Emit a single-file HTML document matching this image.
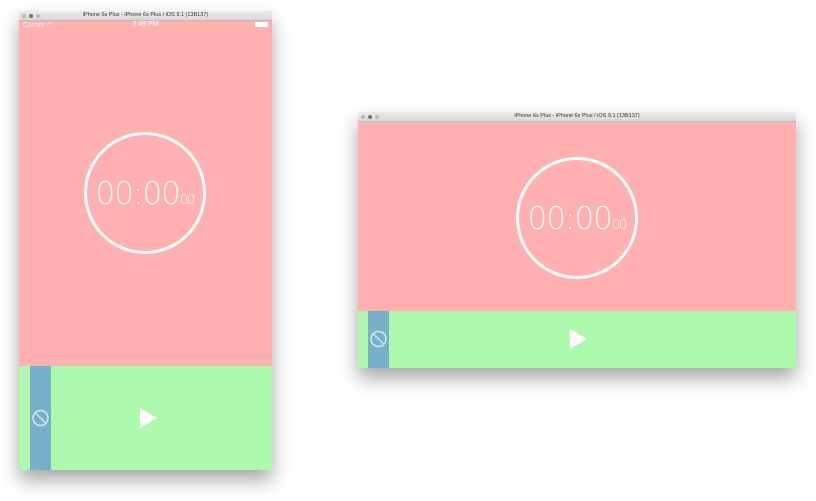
<!DOCTYPE html>
<html><head><style>
body{margin:0;width:816px;height:501px;background:#fff;position:relative;overflow:hidden;font-family:"Liberation Sans",sans-serif}
.win{position:absolute;box-shadow:0 10px 18px rgba(0,0,0,.35);background:#ffb0b0}
.tb{position:absolute;left:0;right:0;top:0;height:9px;background:linear-gradient(#ececec,#d8d8d8);border-bottom:1px solid #bbb;font-size:5.5px;color:#333;text-align:center;line-height:9px}
.dot{position:absolute;top:2.5px;width:4px;height:4px;border-radius:50%;background:#bbb}
.g{position:absolute;left:0;right:0;background:#adf9ae}
.b{position:absolute;background:#79b0c9;top:0;bottom:0}
.circ{position:absolute;width:116px;height:116px;border:3px solid #fff;border-radius:50%;box-sizing:content-box}
.t{position:absolute;left:0;right:0;top:41px;text-align:center;color:#fff;font-size:31px;font-weight:300;letter-spacing:-1px;opacity:.9;font-family:"DejaVu Sans","Liberation Sans",sans-serif;font-weight:200}
.t small{font-size:13px}
.play{position:absolute;width:0;height:0;border-left:17px solid #fff;border-top:10px solid transparent;border-bottom:10px solid transparent}
</style></head><body>
<div class="win" style="left:19px;top:11px;width:253px;height:459px">
 <div class="tb">iPhone 6s Plus - iPhone 6s Plus / iOS 9.1 (13B137)<span class="dot" style="left:3px"></span><span class="dot" style="left:10px;background:#777"></span><span class="dot" style="left:17px"></span></div>
 <div style="position:absolute;top:10px;left:4px;font-size:7px;color:#fff;opacity:.8">Carrier ◠</div>
 <div style="position:absolute;top:10px;left:0;right:0;text-align:center;font-size:7px;color:#fff">7:49 PM</div>
 <div style="position:absolute;top:11px;right:4px;width:13px;height:5px;background:#fff;border-radius:1px"></div>
 <div class="circ" style="left:65px;top:121px"><div class="t">00:00<small>00</small></div></div>
 <div class="g" style="top:355px;bottom:0">
  <div class="b" style="left:11px;width:21px"><svg width="21" height="104" style="position:absolute;left:0;top:0"><circle cx="10.5" cy="52" r="7.5" fill="none" stroke="#d0e6ee" stroke-width="1.5"/><line x1="5.5" y1="47" x2="15.5" y2="57" stroke="#d0e6ee" stroke-width="1.5"/></svg></div>
  <div class="play" style="left:121px;top:42px"></div>
 </div>
</div>
<div class="win" style="left:358px;top:112px;width:438px;height:256px">
 <div class="tb">iPhone 6s Plus - iPhone 6s Plus / iOS 9.1 (13B137)<span class="dot" style="left:3px"></span><span class="dot" style="left:10px;background:#777"></span><span class="dot" style="left:17px"></span></div>
 <div class="circ" style="left:158px;top:45px"><div class="t">00:00<small>00</small></div></div>
 <div class="g" style="top:199px;bottom:0">
  <div class="b" style="left:10px;width:21px"><svg width="21" height="57" style="position:absolute;left:0;top:0"><circle cx="10.5" cy="28" r="7.5" fill="none" stroke="#d0e6ee" stroke-width="1.5"/><line x1="5.5" y1="23" x2="15.5" y2="33" stroke="#d0e6ee" stroke-width="1.5"/></svg></div>
  <div class="play" style="left:212px;top:18px"></div>
 </div>
</div>
</body></html>
